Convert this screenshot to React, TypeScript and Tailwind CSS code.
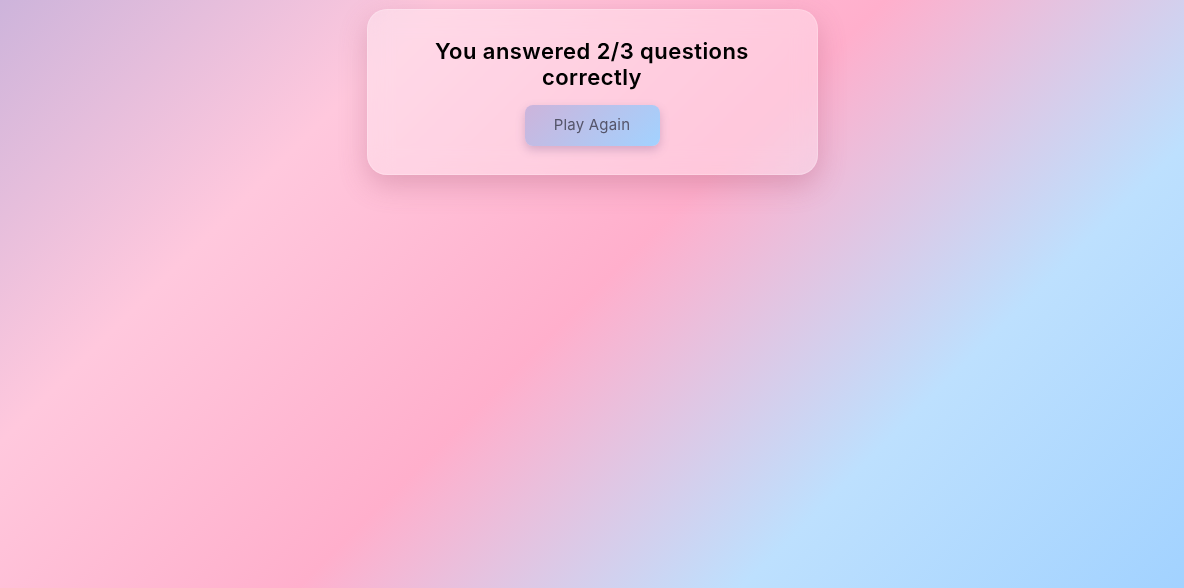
import React from "react";

export default function App() {
  return (
    <div
      className="min-h-screen w-full flex justify-center items-start pt-[9px] bg-[linear-gradient(135deg,#cdb4db_0%,#ffc8dd_25%,#ffafcc_50%,#bde0fe_75%,#a2d2ff_100%)]"
      style={{ fontFamily: "Inter, 'Noto Sans', sans-serif" }}
    >
      <div className="w-[451px] rounded-[20px] bg-white/30 border border-white/20 backdrop-blur-md shadow-[0_10px_28px_rgba(160,80,110,0.3)] pt-[28px] pb-[28px] px-8 flex flex-col items-center">
        <h1 className="text-center text-[22px] leading-[26px] font-semibold text-black tracking-[0.45px]">
          You answered 2/3 questions
          <br />
          correctly
        </h1>
        <button className="mt-[15px] w-[135px] h-[41px] rounded-[8px] bg-[linear-gradient(135deg,#cdb4db,#a2d2ff)] text-[15px] tracking-[0.2px] text-[#55556a] shadow-[0_4px_10px_rgba(120,90,140,0.3)]">
          Play Again
        </button>
      </div>
    </div>
  );
}
